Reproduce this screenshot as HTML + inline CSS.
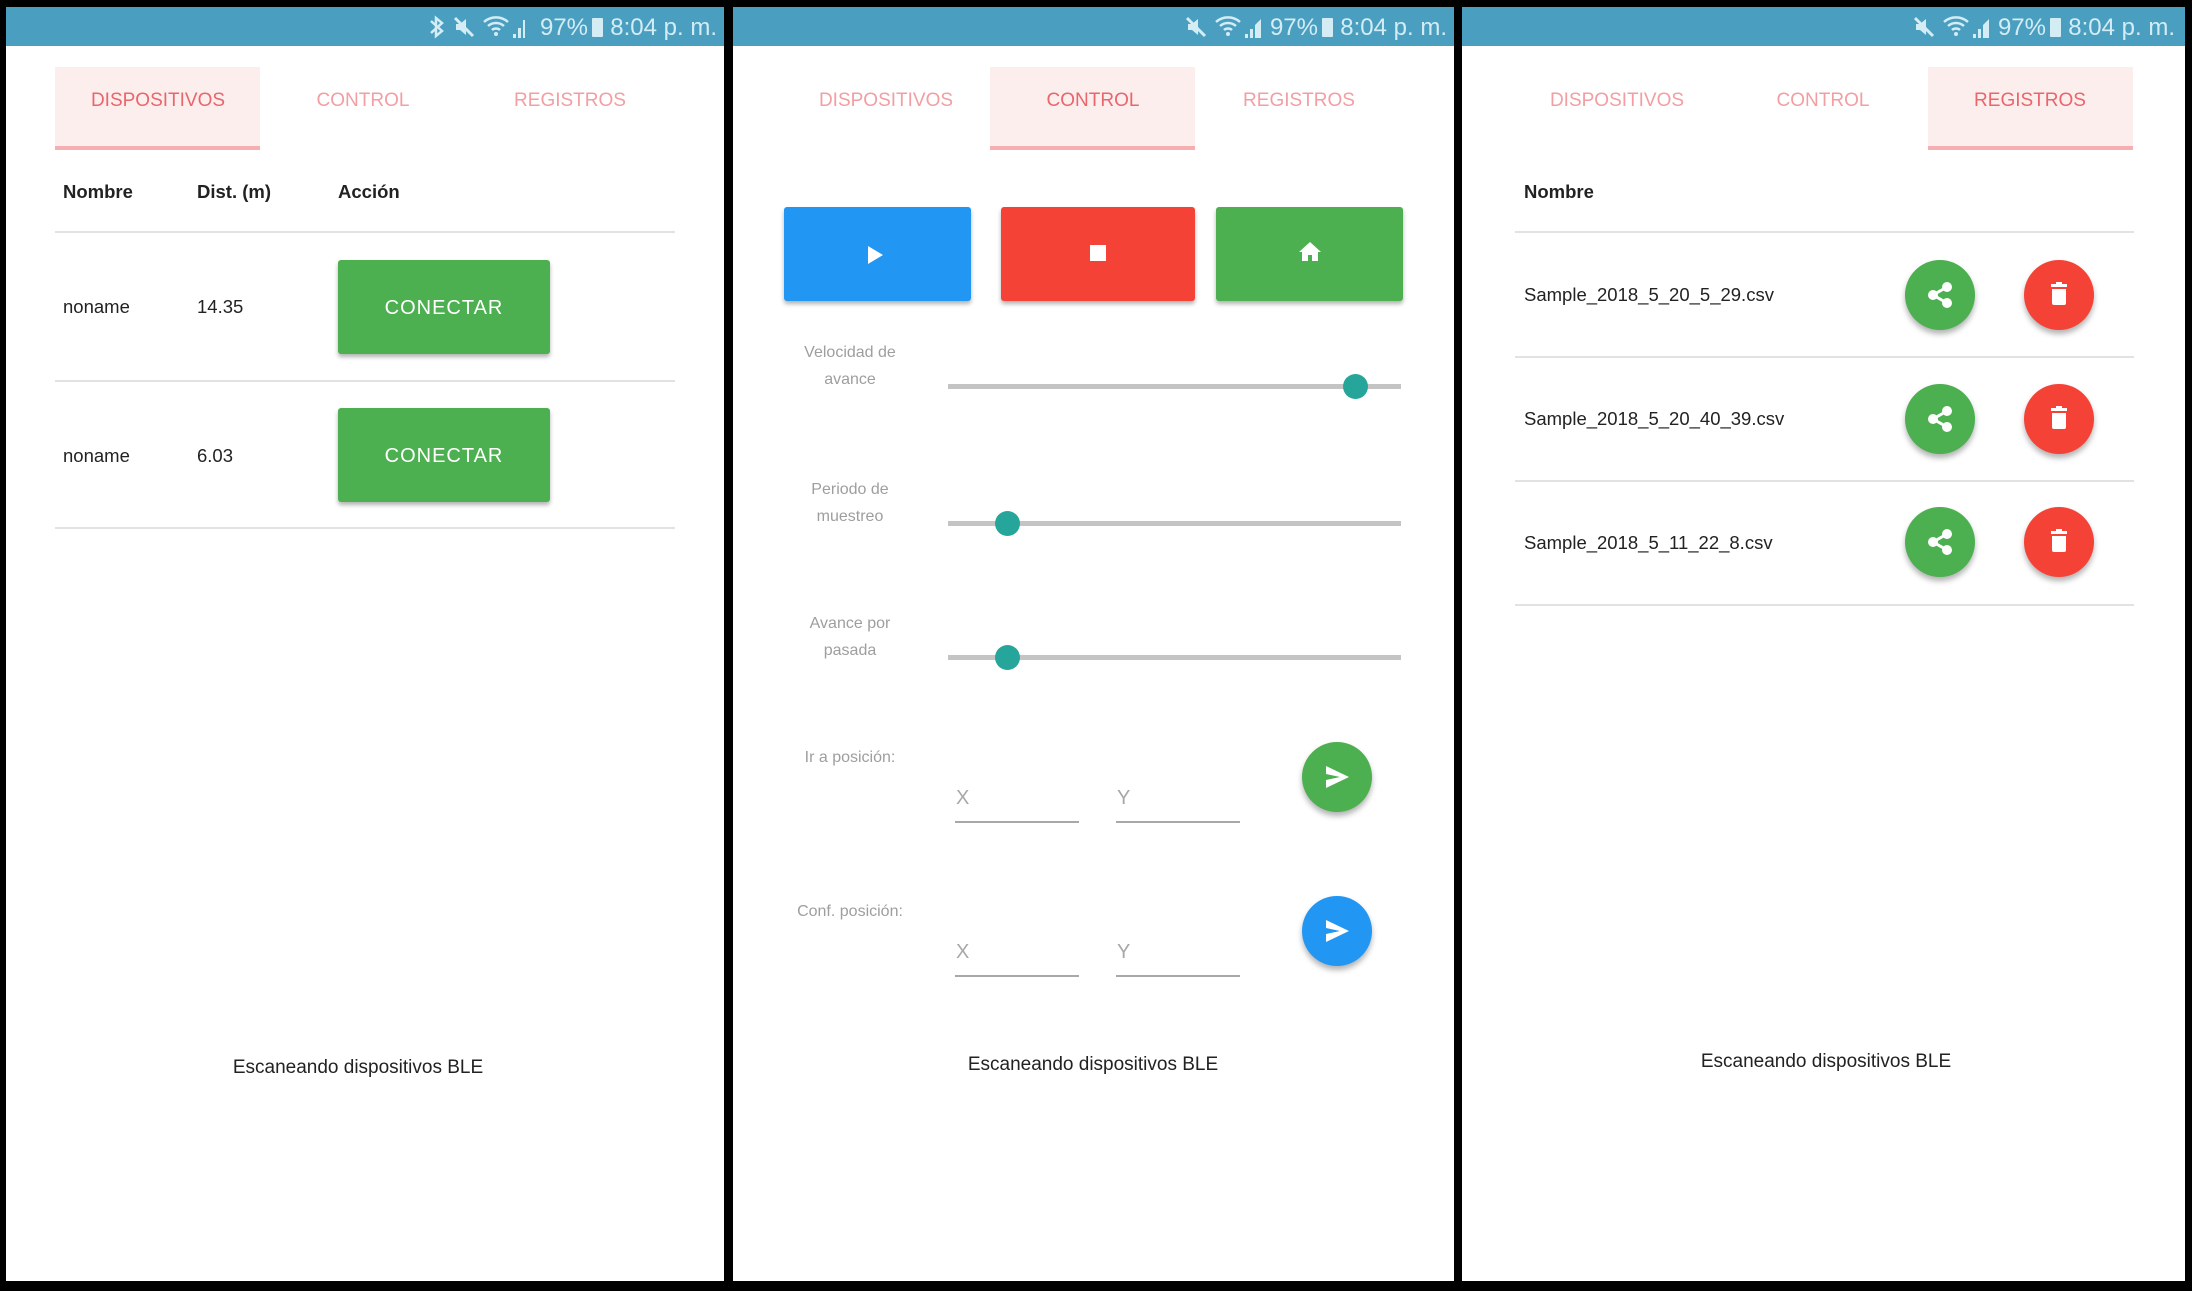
<!DOCTYPE html>
<html><head><meta charset="utf-8"><style>
*{margin:0;padding:0;box-sizing:border-box}
body{width:2192px;height:1291px;background:#000;position:relative;overflow:hidden;font-family:"Liberation Sans",Arial,sans-serif}
.a{position:absolute}
.panel{position:absolute;background:#fff}
.sb{position:absolute;background:#4a9fc0;height:39px;top:7px}
.st{position:absolute;top:8px;height:39px;line-height:39px;color:#d4ecf4;font-size:24px;white-space:nowrap;text-align:right}
.tab{position:absolute;font-size:19px;color:#f29ea2;text-align:center;width:200px;line-height:30px;top:86px}
.tab.on{color:#e8666c}
.hl{position:absolute;background:#fdeeee;top:67px;height:83px;border-bottom:4px solid #f6aeb1}
.t{position:absolute;white-space:nowrap;line-height:30px;font-size:18.5px;color:#222}
.b{font-weight:bold}
.hr{position:absolute;height:2px;background:#e2e2e2}
.btn{position:absolute;background:#4caf50;border-radius:3px;box-shadow:0 3px 4px rgba(0,0,0,.3);color:#fff;font-size:20px;letter-spacing:1px;text-align:center}
.lbl{position:absolute;width:200px;text-align:center;color:#9e9e9e;font-size:16px;line-height:27px}
.track{position:absolute;height:5px;background:#c4c4c4;left:948px;width:453px}
.thumb{position:absolute;width:25px;height:25px;border-radius:50%;background:#26a69a}
.fab{position:absolute;width:70px;height:70px;border-radius:50%;box-shadow:0 4px 6px rgba(0,0,0,.3)}
.fab svg{position:absolute;left:0;top:0}
.ul{position:absolute;height:2px;background:#a8a8a8;width:124px}
.ph{position:absolute;font-size:20px;color:#a8a8a8;line-height:30px}
.center{position:absolute;width:400px;text-align:center;font-size:19px;color:#222;line-height:30px}
</style></head><body>

<div class="panel" style="left:6px;top:7px;width:718px;height:1274px"></div>
<div class="panel" style="left:733px;top:7px;width:721px;height:1274px"></div>
<div class="panel" style="left:1462px;top:7px;width:723px;height:1274px"></div>

<div class="sb" style="left:6px;width:718px"></div>
<div class="sb" style="left:733px;width:721px"></div>
<div class="sb" style="left:1462px;width:723px"></div>

<svg class="a" style="left:427px;top:15px" width="20" height="24" viewBox="0 0 20 24"><path d="M4 6 L15 16 L9 21 V3 L15 8 L4 18" stroke="#d4ecf4" stroke-width="2.5" fill="none"/></svg>
<svg class="a" style="left:452px;top:15px" width="24" height="24" viewBox="0 0 24 24"><path d="M4 9h4l6-5v16l-6-5H4z" fill="#d4ecf4"/><path d="M3 3l18 18" stroke="#d4ecf4" stroke-width="3"/></svg>
<svg class="a" style="left:482px;top:14px" width="46" height="26" viewBox="0 0 46 26"><path d="M2 8a18 18 0 0 1 24 0M6 12a12 12 0 0 1 16 0M10 16a6 6 0 0 1 8 0" stroke="#d4ecf4" stroke-width="2.5" fill="none"/><circle cx="14" cy="20" r="2" fill="#d4ecf4"/><path d="M31 24h3v-4h-3zM36 24h3v-10h-3zM41 24h2v-18h-2z" fill="#d4ecf4"/></svg>
<div class="st" style="left:518px;width:70px">97%</div>
<div class="a" style="left:592px;top:18px;width:11px;height:19px;background:#d4ecf4;border-radius:1px"></div>
<div class="st" style="left:605px;width:112px">8:04 p. m.</div>

<svg class="a" style="left:1184px;top:15px" width="24" height="24" viewBox="0 0 24 24"><path d="M4 9h4l6-5v16l-6-5H4z" fill="#d4ecf4"/><path d="M3 3l18 18" stroke="#d4ecf4" stroke-width="3"/></svg>
<svg class="a" style="left:1214px;top:14px" width="50" height="26" viewBox="0 0 50 26"><path d="M2 8a18 18 0 0 1 24 0M6 12a12 12 0 0 1 16 0M10 16a6 6 0 0 1 8 0" stroke="#d4ecf4" stroke-width="2.5" fill="none"/><circle cx="14" cy="20" r="2" fill="#d4ecf4"/><path d="M31 24h3v-4h-3zM36 24h3v-9h-3zM41 24h6v-19l-6 6z" fill="#d4ecf4"/></svg>
<div class="st" style="left:1248px;width:70px">97%</div>
<div class="a" style="left:1322px;top:18px;width:11px;height:19px;background:#d4ecf4;border-radius:1px"></div>
<div class="st" style="left:1335px;width:112px">8:04 p. m.</div>

<svg class="a" style="left:1912px;top:15px" width="24" height="24" viewBox="0 0 24 24"><path d="M4 9h4l6-5v16l-6-5H4z" fill="#d4ecf4"/><path d="M3 3l18 18" stroke="#d4ecf4" stroke-width="3"/></svg>
<svg class="a" style="left:1942px;top:14px" width="50" height="26" viewBox="0 0 50 26"><path d="M2 8a18 18 0 0 1 24 0M6 12a12 12 0 0 1 16 0M10 16a6 6 0 0 1 8 0" stroke="#d4ecf4" stroke-width="2.5" fill="none"/><circle cx="14" cy="20" r="2" fill="#d4ecf4"/><path d="M31 24h3v-4h-3zM36 24h3v-9h-3zM41 24h6v-19l-6 6z" fill="#d4ecf4"/></svg>
<div class="st" style="left:1976px;width:70px">97%</div>
<div class="a" style="left:2050px;top:18px;width:11px;height:19px;background:#d4ecf4;border-radius:1px"></div>
<div class="st" style="left:2063px;width:112px">8:04 p. m.</div>

<!-- Panel 1 -->
<div class="hl" style="left:55px;width:205px"></div>
<div class="tab on" style="left:58px">DISPOSITIVOS</div>
<div class="tab" style="left:263px">CONTROL</div>
<div class="tab" style="left:470px">REGISTROS</div>

<div class="t b" style="left:63px;top:177px">Nombre</div>
<div class="t b" style="left:197px;top:177px">Dist. (m)</div>
<div class="t b" style="left:338px;top:177px">Acción</div>
<div class="hr" style="left:55px;width:620px;top:231px"></div>

<div class="t" style="left:63px;top:292px">noname</div>
<div class="t" style="left:197px;top:292px">14.35</div>
<div class="btn" style="left:338px;top:260px;width:212px;height:94px;line-height:96px">CONECTAR</div>
<div class="hr" style="left:55px;width:620px;top:380px"></div>

<div class="t" style="left:63px;top:441px">noname</div>
<div class="t" style="left:197px;top:441px">6.03</div>
<div class="btn" style="left:338px;top:408px;width:212px;height:94px;line-height:96px">CONECTAR</div>
<div class="hr" style="left:55px;width:620px;top:527px"></div>

<div class="center" style="left:158px;top:1053px">Escaneando dispositivos BLE</div>

<!-- Panel 2 -->
<div class="hl" style="left:990px;width:205px"></div>
<div class="tab" style="left:786px">DISPOSITIVOS</div>
<div class="tab on" style="left:993px">CONTROL</div>
<div class="tab" style="left:1199px">REGISTROS</div>

<div class="btn" style="left:784px;top:207px;width:187px;height:94px;background:#2196f3"></div>
<svg class="a" style="left:868px;top:246px" width="16" height="18"><path d="M0 0L15 9L0 18z" fill="#fff"/></svg>
<div class="btn" style="left:1001px;top:207px;width:194px;height:94px;background:#f44336"></div>
<div class="a" style="left:1090px;top:245px;width:16px;height:16px;background:#fff"></div>
<div class="btn" style="left:1216px;top:207px;width:187px;height:94px;background:#4caf50"></div>
<svg class="a" style="left:1299px;top:242px" width="22" height="20" viewBox="0 0 22 20"><path d="M11 0L0 10h3v9h6v-6h4v6h6v-9h3z" fill="#fff"/></svg>

<div class="lbl" style="left:750px;top:339px">Velocidad de<br>avance</div>
<div class="track" style="top:384px"></div>
<div class="thumb" style="left:1343px;top:374px"></div>

<div class="lbl" style="left:750px;top:476px">Periodo de<br>muestreo</div>
<div class="track" style="top:521px"></div>
<div class="thumb" style="left:995px;top:511px"></div>

<div class="lbl" style="left:750px;top:610px">Avance por<br>pasada</div>
<div class="track" style="top:655px"></div>
<div class="thumb" style="left:995px;top:645px"></div>

<div class="lbl" style="left:750px;top:744px">Ir a posición:</div>
<div class="ph" style="left:956px;top:783px">X</div>
<div class="ul" style="left:955px;top:821px"></div>
<div class="ph" style="left:1117px;top:783px">Y</div>
<div class="ul" style="left:1116px;top:821px"></div>
<div class="fab" style="left:1302px;top:742px;background:#4caf50"><svg width="70" height="70" viewBox="0 0 70 70"><path d="M24 24L47 35L24 46V38L38 35L24 32z" fill="#fff"/></svg></div>

<div class="lbl" style="left:750px;top:898px">Conf. posición:</div>
<div class="ph" style="left:956px;top:937px">X</div>
<div class="ul" style="left:955px;top:975px"></div>
<div class="ph" style="left:1117px;top:937px">Y</div>
<div class="ul" style="left:1116px;top:975px"></div>
<div class="fab" style="left:1302px;top:896px;background:#2196f3"><svg width="70" height="70" viewBox="0 0 70 70"><path d="M24 24L47 35L24 46V38L38 35L24 32z" fill="#fff"/></svg></div>

<div class="center" style="left:893px;top:1050px">Escaneando dispositivos BLE</div>

<!-- Panel 3 -->
<div class="hl" style="left:1928px;width:205px"></div>
<div class="tab" style="left:1517px">DISPOSITIVOS</div>
<div class="tab" style="left:1723px">CONTROL</div>
<div class="tab on" style="left:1930px">REGISTROS</div>

<div class="t b" style="left:1524px;top:177px">Nombre</div>
<div class="hr" style="left:1515px;width:619px;top:231px"></div>

<div class="t" style="left:1524px;top:280px">Sample_2018_5_20_5_29.csv</div>
<div class="hr" style="left:1515px;width:619px;top:356px"></div>
<div class="t" style="left:1524px;top:404px">Sample_2018_5_20_40_39.csv</div>
<div class="hr" style="left:1515px;width:619px;top:480px"></div>
<div class="t" style="left:1524px;top:528px">Sample_2018_5_11_22_8.csv</div>
<div class="hr" style="left:1515px;width:619px;top:604px"></div>

<div class="fab" style="left:1905px;top:260px;background:#4caf50"><svg width="70" height="70" viewBox="0 0 70 70"><path d="M42 27L28 35L42 43" stroke="#fff" stroke-width="3" fill="none"/><circle cx="42" cy="27" r="5" fill="#fff"/><circle cx="28" cy="35" r="5" fill="#fff"/><circle cx="42" cy="43" r="5" fill="#fff"/></svg></div>
<div class="fab" style="left:2024px;top:260px;background:#f44336"><svg width="70" height="70" viewBox="0 0 70 70"><path d="M27 24h16v3H27zM32 22h6v2h-6zM28 29h14v14a2 2 0 0 1-2 2H30a2 2 0 0 1-2-2z" fill="#fff"/></svg></div>

<div class="fab" style="left:1905px;top:384px;background:#4caf50"><svg width="70" height="70" viewBox="0 0 70 70"><path d="M42 27L28 35L42 43" stroke="#fff" stroke-width="3" fill="none"/><circle cx="42" cy="27" r="5" fill="#fff"/><circle cx="28" cy="35" r="5" fill="#fff"/><circle cx="42" cy="43" r="5" fill="#fff"/></svg></div>
<div class="fab" style="left:2024px;top:384px;background:#f44336"><svg width="70" height="70" viewBox="0 0 70 70"><path d="M27 24h16v3H27zM32 22h6v2h-6zM28 29h14v14a2 2 0 0 1-2 2H30a2 2 0 0 1-2-2z" fill="#fff"/></svg></div>

<div class="fab" style="left:1905px;top:507px;background:#4caf50"><svg width="70" height="70" viewBox="0 0 70 70"><path d="M42 27L28 35L42 43" stroke="#fff" stroke-width="3" fill="none"/><circle cx="42" cy="27" r="5" fill="#fff"/><circle cx="28" cy="35" r="5" fill="#fff"/><circle cx="42" cy="43" r="5" fill="#fff"/></svg></div>
<div class="fab" style="left:2024px;top:507px;background:#f44336"><svg width="70" height="70" viewBox="0 0 70 70"><path d="M27 24h16v3H27zM32 22h6v2h-6zM28 29h14v14a2 2 0 0 1-2 2H30a2 2 0 0 1-2-2z" fill="#fff"/></svg></div>

<div class="center" style="left:1626px;top:1047px">Escaneando dispositivos BLE</div>

</body></html>
